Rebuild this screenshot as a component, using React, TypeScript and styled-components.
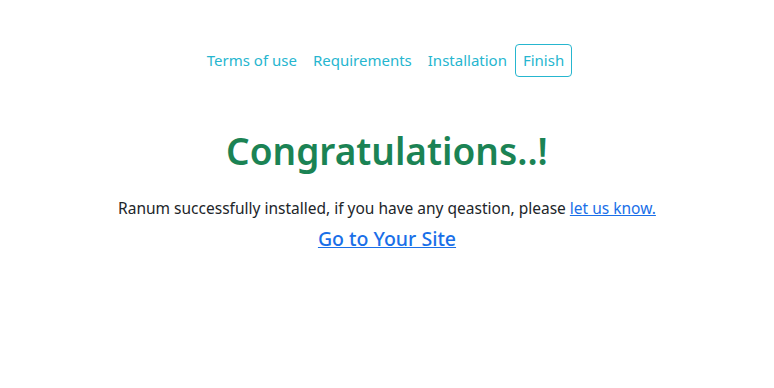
import React from "react";
import styled, { createGlobalStyle } from "styled-components";

const Global = createGlobalStyle`
  html, body { margin: 0; padding: 0; background: #fff; }
  body { font-family: "Noto Sans", "Open Sans", sans-serif; color: #212529; }
`;

const Page = styled.div`
  display: flex;
  flex-direction: column;
  align-items: center;
  padding-top: 44px;
`;

const Nav = styled.nav`
  display: flex;
  align-items: center;
  padding-right: 3px;
`;

const NavLink = styled.a<{ $active?: boolean }>`
  font-size: 15px;
  line-height: 23px;
  color: #26b6cf;
  text-decoration: none;
  padding: ${(p) => (p.$active ? "4px 7px" : "5px 8px")};
  border: ${(p) => (p.$active ? "1px solid #26b6cf" : "none")};
  border-radius: 4px;
`;

const Heading = styled.h1`
  margin: 50px 0 0;
  font-size: 37px;
  font-weight: 600;
  line-height: 48px;
  color: #1b8354;
`;

const Lead = styled.p`
  margin: 21px 0 0;
  font-size: 15.5px;
  line-height: 24px;
`;

const InlineLink = styled.a`
  color: #1a6fe8;
  text-decoration: underline;
`;

const SiteLink = styled.a`
  margin-top: 6px;
  font-size: 19.5px;
  line-height: 26px;
  font-weight: 500;
  color: #1a6fe8;
  text-decoration: underline;
`;

export default function App() {
  return (
    <>
      <Global />
      <Page>
        <Nav>
          <NavLink href="#">Terms of use</NavLink>
          <NavLink href="#">Requirements</NavLink>
          <NavLink href="#">Installation</NavLink>
          <NavLink href="#" $active>Finish</NavLink>
        </Nav>
        <Heading>Congratulations..!</Heading>
        <Lead>
          Ranum successfully installed, if you have any qeastion, please{" "}
          <InlineLink href="#">let us know.</InlineLink>
        </Lead>
        <SiteLink href="#">Go to Your Site</SiteLink>
      </Page>
    </>
  );
}
